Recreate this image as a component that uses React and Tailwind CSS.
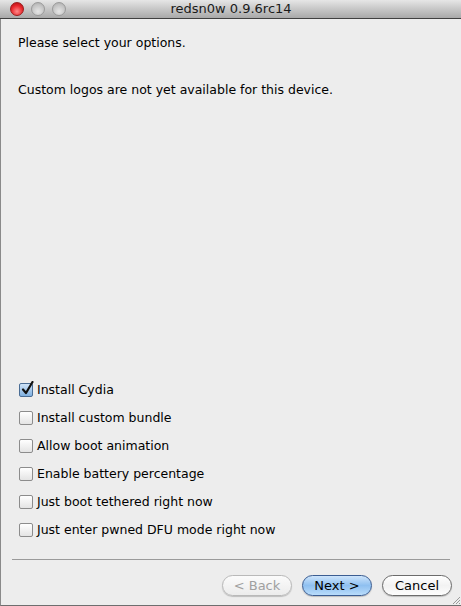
import React from 'react'

const options = [
  { label: 'Install Cydia', checked: true },
  { label: 'Install custom bundle' },
  { label: 'Allow boot animation' },
  { label: 'Enable battery percentage' },
  { label: 'Just boot tethered right now' },
  { label: 'Just enter pwned DFU mode right now' },
]

function Light({ red }) {
  return (
    <span
      className={
        'block w-[14px] h-[14px] rounded-full border ' +
        (red
          ? 'border-[#9b1c1c] bg-[radial-gradient(circle_at_50%_70%,#ff8a8a_0%,#e8262b_55%,#a50c10_100%)]'
          : 'border-[#9a9a9a] bg-[radial-gradient(circle_at_50%_70%,#e6e6e6_0%,#c4c4c4_60%,#a8a8a8_100%)]')
      }
    />
  )
}

function Checkbox({ checked }) {
  return (
    <span
      className={
        'relative block shrink-0 w-[14px] h-[14px] rounded-[2px] border ' +
        (checked
          ? 'border-[#4a6d95] bg-gradient-to-b from-[#cfe3f7] to-[#7fb0e0]'
          : 'border-[#8c8c8c] bg-gradient-to-b from-[#ffffff] to-[#e4e4e4]')
      }
    >
      {checked && (
        <svg className="absolute left-[1px] top-[-3px]" width="14" height="15" viewBox="0 0 14 15">
          <path d="M2 8.5 L5 12 L11.5 1" fill="none" stroke="#111" strokeWidth="2.2" strokeLinecap="round" strokeLinejoin="round" />
        </svg>
      )}
    </span>
  )
}

function Button({ children, kind }) {
  const styles = {
    back: 'border-[#b9b9b9] text-[#a0a0a0] bg-gradient-to-b from-[#fbfbfb] to-[#ececec]',
    next: 'border-[#3b5d92] text-black bg-gradient-to-b from-[#cde4fb] via-[#8fc0f0] to-[#b9dcfb]',
    cancel: 'border-[#6b6b6b] text-black bg-gradient-to-b from-[#ffffff] via-[#f2f2f2] to-[#fdfdfd]',
  }
  return (
    <div className={'w-[70px] h-[21px] rounded-full border flex items-center justify-center text-[13px] shadow-[0_1px_1px_rgba(0,0,0,0.2)] ' + styles[kind]}>
      {children}
    </div>
  )
}

export default function App() {
  return (
    <div className="w-[461px] h-[606px] overflow-hidden bg-[#ededed] font-['DejaVu_Sans',sans-serif] text-[12.5px] text-black flex flex-col">
      <div className="h-[19px] shrink-0 relative flex items-center border-b border-[#404040] bg-gradient-to-b from-[#e6e6e6] to-[#a9a9a9]">
        <div className="flex items-center gap-[7px] pl-[10px]">
          <Light red />
          <Light />
          <Light />
        </div>
        <div className="absolute inset-0 flex items-center justify-center text-[13px] text-[#1a1a1a]">
          <span className="ml-[1px]">redsn0w 0.9.6rc14</span>
        </div>
      </div>

      <div className="flex-1 flex flex-col border-l border-[#8a8a8a] border-b border-b-[#6e6e6e]">
        <div className="pl-[17px] pt-[16px]">
          <p className="leading-[16px]">Please select your options.</p>
          <p className="leading-[16px] mt-[31px]">Custom logos are not yet available for this device.</p>
        </div>

        <div className="flex-1" />

        <div className="pl-[18px] flex flex-col gap-[14px]">
          {options.map((o) => (
            <div key={o.label} className="flex items-center gap-[4px] h-[14px]">
              <Checkbox checked={o.checked} />
              <span className="leading-[14px]">{o.label}</span>
            </div>
          ))}
        </div>

        <div className="mt-[22px] mx-[11px] h-px bg-[#9a9a9a]" />

        <div className="flex justify-end gap-[10px] pr-[9px] pt-[15px] pb-[9px] relative">
          <Button kind="back">&lt; Back</Button>
          <Button kind="next">Next &gt;</Button>
          <Button kind="cancel">Cancel</Button>
          <svg className="absolute right-0 bottom-0" width="10" height="10" viewBox="0 0 10 10">
            <path d="M9 2 L2 9 M9 5 L5 9 M9 8 L8 9" stroke="#9a9a9a" strokeWidth="1" />
          </svg>
        </div>
      </div>
    </div>
  )
}
